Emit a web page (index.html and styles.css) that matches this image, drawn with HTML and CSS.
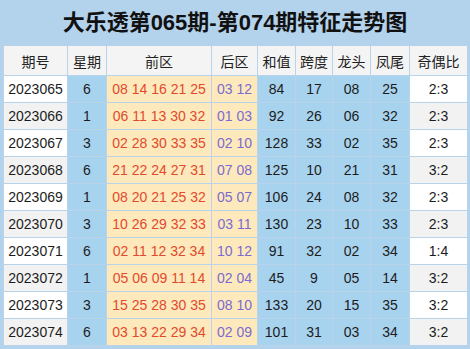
FILE: index.html
```html
<!DOCTYPE html>
<html lang="zh">
<head>
<meta charset="utf-8">
<link rel="stylesheet" href="styles.css">
</head>
<body>
<div class="panel">
  <h1 class="title">大乐透第065期-第074期特征走势图</h1>
  <table class="grid">
    <colgroup>
      <col class="c-issue"><col class="c-week"><col class="c-front"><col class="c-back"><col class="c-sum"><col class="c-span"><col class="c-head"><col class="c-tail"><col class="c-ratio">
    </colgroup>
    <thead>
      <tr><th>期号</th><th>星期</th><th>前区</th><th>后区</th><th>和值</th><th>跨度</th><th>龙头</th><th>凤尾</th><th>奇偶比</th></tr>
    </thead>
    <tbody>
      <tr><td class="plain">2023065</td><td class="blue">6</td><td class="front">08 14 16 21 25</td><td class="back">03 12</td><td class="blue">84</td><td class="blue">17</td><td class="blue">08</td><td class="blue">25</td><td class="plain">2:3</td></tr>
      <tr><td class="plain">2023066</td><td class="blue">1</td><td class="front">06 11 13 30 32</td><td class="back">01 03</td><td class="blue">92</td><td class="blue">26</td><td class="blue">06</td><td class="blue">32</td><td class="plain">2:3</td></tr>
      <tr><td class="plain">2023067</td><td class="blue">3</td><td class="front">02 28 30 33 35</td><td class="back">02 10</td><td class="blue">128</td><td class="blue">33</td><td class="blue">02</td><td class="blue">35</td><td class="plain">2:3</td></tr>
      <tr><td class="plain">2023068</td><td class="blue">6</td><td class="front">21 22 24 27 31</td><td class="back">07 08</td><td class="blue">125</td><td class="blue">10</td><td class="blue">21</td><td class="blue">31</td><td class="plain">3:2</td></tr>
      <tr><td class="plain">2023069</td><td class="blue">1</td><td class="front">08 20 21 25 32</td><td class="back">05 07</td><td class="blue">106</td><td class="blue">24</td><td class="blue">08</td><td class="blue">32</td><td class="plain">2:3</td></tr>
      <tr><td class="plain">2023070</td><td class="blue">3</td><td class="front">10 26 29 32 33</td><td class="back">03 11</td><td class="blue">130</td><td class="blue">23</td><td class="blue">10</td><td class="blue">33</td><td class="plain">2:3</td></tr>
      <tr><td class="plain">2023071</td><td class="blue">6</td><td class="front">02 11 12 32 34</td><td class="back">10 12</td><td class="blue">91</td><td class="blue">32</td><td class="blue">02</td><td class="blue">34</td><td class="plain">1:4</td></tr>
      <tr><td class="plain">2023072</td><td class="blue">1</td><td class="front">05 06 09 11 14</td><td class="back">02 04</td><td class="blue">45</td><td class="blue">9</td><td class="blue">05</td><td class="blue">14</td><td class="plain">3:2</td></tr>
      <tr><td class="plain">2023073</td><td class="blue">3</td><td class="front">15 25 28 30 35</td><td class="back">08 10</td><td class="blue">133</td><td class="blue">20</td><td class="blue">15</td><td class="blue">35</td><td class="plain">3:2</td></tr>
      <tr><td class="plain">2023074</td><td class="blue">6</td><td class="front">03 13 22 29 34</td><td class="back">02 09</td><td class="blue">101</td><td class="blue">31</td><td class="blue">03</td><td class="blue">34</td><td class="plain">3:2</td></tr>
    </tbody>
  </table>
</div>
</body>
</html>
```

FILE: styles.css
```css
html, body {
  margin: 0;
  padding: 0;
  background: #ffffff;
}
.panel {
  width: 470px;
  height: 349px;
  box-sizing: border-box;
  background: #b3d2ec;
  padding: 0 3px 4px 3px;
  font-family: "Liberation Sans", "Noto Sans CJK SC", sans-serif;
}
.title {
  margin: 0;
  height: 45px;
  line-height: 45px;
  text-align: center;
  font-size: 22px;
  font-weight: bold;
  color: #111111;
  font-family: "Liberation Sans", "Noto Sans CJK SC", sans-serif;
}
.grid {
  width: 464px;
  table-layout: fixed;
  border-collapse: collapse;
  font-size: 14px;
  color: #1c1c1c;
}
.c-issue { width: 64px; }
.c-week { width: 39px; }
.c-front { width: 105px; }
.c-back { width: 46px; }
.c-sum { width: 38px; }
.c-span { width: 37px; }
.c-head { width: 38px; }
.c-tail { width: 39px; }
.c-ratio { width: 58px; }
.grid th, .grid td {
  border: 1px solid #b9d3ea;
  padding: 0;
  text-align: center;
  white-space: nowrap;
  overflow: hidden;
}
.grid th {
  height: 29px;
  font-weight: normal;
  background: #f4f4f4;
  color: #222222;
}
.grid td {
  height: 26px;
}
.grid td.plain { background: #ffffff; }
.grid tr:nth-child(even) td.plain { background: #f2f2f2; }
.grid td.blue { background: #a8d3ef; }
.grid td.front { background: #fde9bb; color: #e24a2e; }
.grid td.back { background: #fde9bb; color: #7a6cd0; }
```
